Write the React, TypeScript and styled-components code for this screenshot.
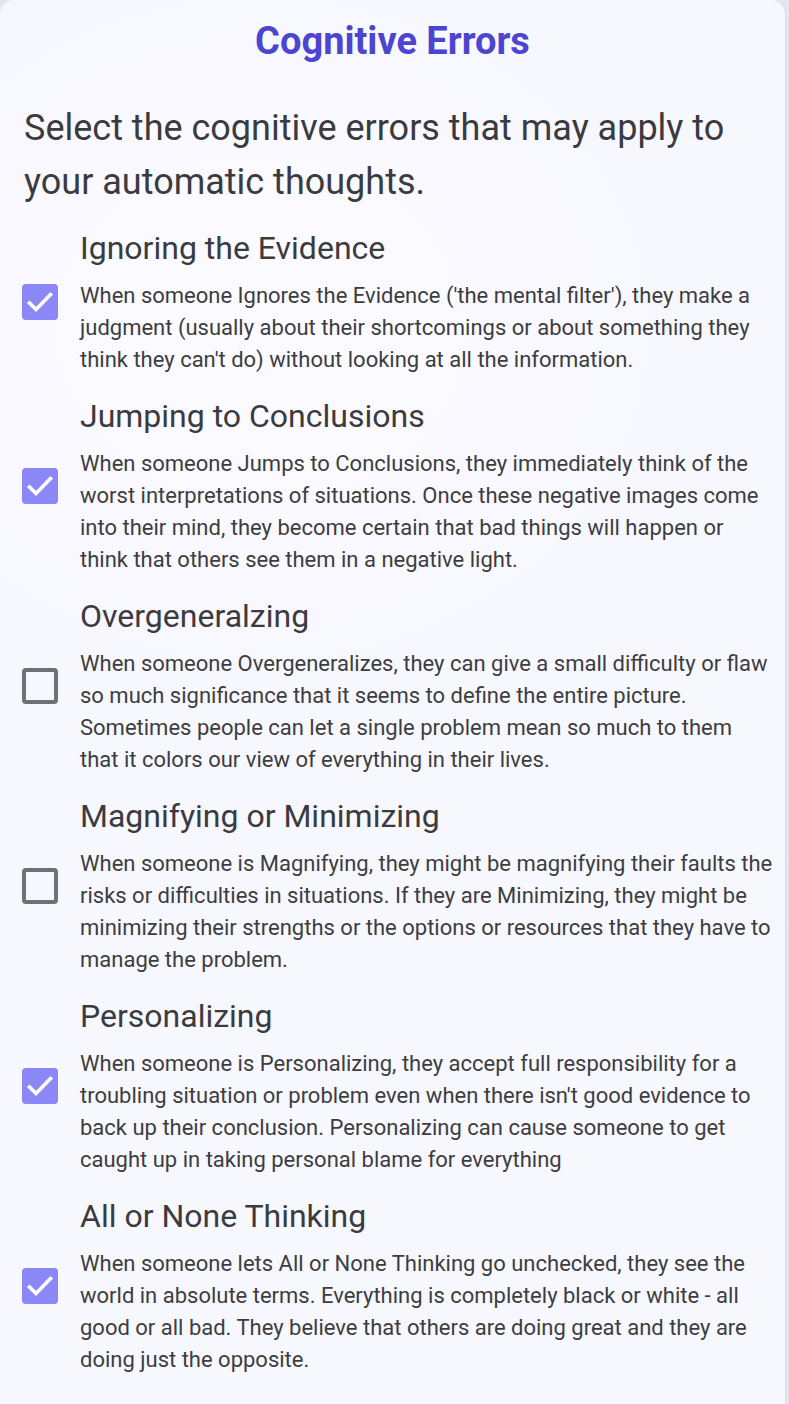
import React, { useState } from "react";
import styled, { createGlobalStyle } from "styled-components";

const GlobalStyle = createGlobalStyle`
    body {
        margin: 0;
        background: #e2e6ee;
        font-family: Roboto, "Noto Sans", sans-serif;
    }
`;

const Card = styled.div`
    width: 786px;
    min-height: 1404px;
    box-sizing: border-box;
    padding: 16px 0 24px;
    background: radial-gradient(
            ellipse 420px 360px at 260px 330px,
            #fbfbff 0%,
            rgba(251, 251, 255, 0) 100%
        ),
        #f7f7fe;
    border-right: 1px solid #d6dce8;
    border-radius: 14px 14px 0 0;
`;

const Title = styled.h1`
    margin: 0;
    font-size: 38px;
    line-height: 50px;
    font-weight: 700;
    color: #4b45cf;
    text-align: center;
`;

const Intro = styled.p`
    margin: 35px 10px 19px 24px;
    font-size: 36px;
    line-height: 54px;
    font-weight: 400;
    color: #3b3b3f;
`;

const List = styled.div`
    display: flex;
    flex-direction: column;
    gap: 20px;
    padding: 0 10px 0 22px;
`;

const Row = styled.label`
    display: flex;
    align-items: center;
    gap: 22px;
    cursor: pointer;
`;

const Box = styled.span<{ $checked: boolean }>`
    flex: none;
    width: 36px;
    height: 36px;
    box-sizing: border-box;
    border-radius: 4px;
    display: flex;
    background: ${(p) => (p.$checked ? "#8b87f6" : "transparent")};
    border: ${(p) => (p.$checked ? "none" : "4px solid #707075")};
`;

const Body = styled.div`
    display: flex;
    flex-direction: column;
    gap: 12px;
    min-width: 0;
`;

const ItemTitle = styled.div`
    font-size: 32px;
    line-height: 40px;
    color: #3b3b3f;
`;

const Description = styled.div`
    font-size: 22px;
    line-height: 32px;
    color: #3d3d41;
`;

const Check = () => (
    <svg width="36" height="36" viewBox="0 0 36 36" fill="none">
        <path
            d="M7.5 19l6.5 6.5L28.5 10.5"
            stroke="#fff"
            strokeWidth="3.6"
            strokeLinecap="square"
        />
    </svg>
);

const errors = [
    {
        title: "Ignoring the Evidence",
        text: "When someone Ignores the Evidence ('the mental filter'), they make a judgment (usually about their shortcomings or about something they think they can't do) without looking at all the information.",
        checked: true,
    },
    {
        title: "Jumping to Conclusions",
        text: "When someone Jumps to Conclusions, they immediately think of the worst interpretations of situations. Once these negative images come into their mind, they become certain that bad things will happen or think that others see them in a negative light.",
        checked: true,
    },
    {
        title: "Overgeneralzing",
        text: "When someone Overgeneralizes, they can give a small difficulty or flaw so much significance that it seems to define the entire picture. Sometimes people can let a single problem mean so much to them that it colors our view of everything in their lives.",
        checked: false,
    },
    {
        title: "Magnifying or Minimizing",
        text: "When someone is Magnifying, they might be magnifying their faults the risks or difficulties in situations. If they are Minimizing, they might be minimizing their strengths or the options or resources that they have to manage the problem.",
        checked: false,
    },
    {
        title: "Personalizing",
        text: "When someone is Personalizing, they accept full responsibility for a troubling situation or problem even when there isn't good evidence to back up their conclusion. Personalizing can cause someone to get caught up in taking personal blame for everything",
        checked: true,
    },
    {
        title: "All or None Thinking",
        text: "When someone lets All or None Thinking go unchecked, they see the world in absolute terms. Everything is completely black or white - all good or all bad. They believe that others are doing great and they are doing just the opposite.",
        checked: true,
    },
];

const App = () => {
    const [checked, setChecked] = useState(errors.map((e) => e.checked));

    const toggle = (i: number) =>
        setChecked((prev) => prev.map((c, j) => (j === i ? !c : c)));

    return (
        <>
            <GlobalStyle />
            <Card>
                <Title>Cognitive Errors</Title>
                <Intro>
                    Select the cognitive errors that may apply to your
                    automatic thoughts.
                </Intro>
                <List>
                    {errors.map((item, i) => (
                        <Row key={item.title} onClick={() => toggle(i)}>
                            <Box $checked={checked[i]}>
                                {checked[i] && <Check />}
                            </Box>
                            <Body>
                                <ItemTitle>{item.title}</ItemTitle>
                                <Description>{item.text}</Description>
                            </Body>
                        </Row>
                    ))}
                </List>
            </Card>
        </>
    );
};

export default App;
